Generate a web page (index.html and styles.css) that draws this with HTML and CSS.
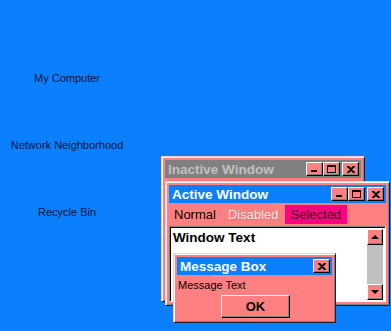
FILE: index.html
```html
<!DOCTYPE html>
<html lang="en">
<head>
    <meta charset="UTF-8">
    <title>Appearance Preview</title>
    <link rel="stylesheet" href="styles.css">
</head>
<body>
    <div class="desktop">
        <div class="icons">
            <div class="icon-label">My Computer</div>
            <div class="icon-label">Network Neighborhood</div>
            <div class="icon-label">Recycle Bin</div>
        </div>

        <div class="win inactive">
            <div class="titlebar">
                <span class="title">Inactive Window</span>
                <div class="controls">
                    <span class="tbtn"><span class="min"></span></span>
                    <span class="tbtn"><span class="max"></span></span>
                    <span class="tbtn close">
                        <svg width="8" height="7" viewBox="0 0 8 7"><path d="M0 0h2l2 2 2-2h2v1L5 3.5 8 6v1H6L4 5 2 7H0V6l3-2.5L0 1z" fill="#000"/></svg>
                    </span>
                </div>
            </div>
        </div>

        <div class="win active">
            <div class="titlebar">
                <span class="title">Active Window</span>
                <div class="controls">
                    <span class="tbtn"><span class="min"></span></span>
                    <span class="tbtn"><span class="max"></span></span>
                    <span class="tbtn close">
                        <svg width="8" height="7" viewBox="0 0 8 7"><path d="M0 0h2l2 2 2-2h2v1L5 3.5 8 6v1H6L4 5 2 7H0V6l3-2.5L0 1z" fill="#000"/></svg>
                    </span>
                </div>
            </div>
            <div class="menubar">
                <span class="menu-item">Normal</span>
                <span class="menu-item disabled">Disabled</span>
                <span class="menu-item selected">Selected</span>
            </div>
            <div class="client">
                <div class="client-text">Window Text</div>
                <div class="scrollbar">
                    <span class="sbtn"><span class="arrow up"></span></span>
                    <span class="sbtn"><span class="arrow down"></span></span>
                </div>
            </div>
        </div>

        <div class="win msgbox">
            <div class="titlebar">
                <span class="title">Message Box</span>
                <div class="controls">
                    <span class="tbtn close">
                        <svg width="8" height="7" viewBox="0 0 8 7"><path d="M0 0h2l2 2 2-2h2v1L5 3.5 8 6v1H6L4 5 2 7H0V6l3-2.5L0 1z" fill="#000"/></svg>
                    </span>
                </div>
            </div>
            <div class="msg-body">
                <div class="msg-text">Message Text</div>
                <button class="ok" type="button">OK</button>
            </div>
        </div>
    </div>
</body>
</html>
```

FILE: styles.css
```css
body {
    margin: 0;
    padding: 0;
    font-family: "Liberation Sans", Arial, sans-serif;
}

.desktop {
    position: relative;
    width: 391px;
    height: 331px;
    background-color: #0a80ff;
    overflow: hidden;
}

.icons {
    width: 134px;
    padding-top: 72px;
    display: flex;
    flex-direction: column;
    align-items: center;
    gap: 54px;
}

.icon-label {
    font-size: 11px;
    line-height: 13px;
    color: #00113a;
}

/* windows sit on the desktop like real windows */
.win {
    position: absolute;
    box-sizing: border-box;
    background-color: #ff8080;
    border: 1px solid;
    border-color: #ffc8c8 #202020 #202020 #ffc8c8;
    box-shadow: inset 1px 1px #ffffff, inset -1px -1px #808080;
    padding: 3px;
    display: flex;
    flex-direction: column;
}

.inactive {
    left: 161px;
    top: 156px;
    width: 204px;
    height: 146px;
}

.active {
    left: 165px;
    top: 181px;
    width: 225px;
    height: 125px;
}

.msgbox {
    left: 173px;
    top: 253px;
    width: 163px;
    height: 70px;
}

.titlebar {
    height: 18px;
    display: flex;
    align-items: center;
    justify-content: space-between;
    padding: 0 2px 0 3px;
    background-color: #0a80ff;
    flex-shrink: 0;
}

.inactive .titlebar {
    background-color: #808080;
}

.title {
    font-size: 13.5px;
    font-weight: bold;
    color: #fff;
}

.inactive .title {
    color: #c0c0c0;
}

.controls {
    display: flex;
}

.tbtn {
    box-sizing: border-box;
    width: 17px;
    height: 14px;
    background-color: #ff8080;
    border: 1px solid;
    border-color: #ffffff #000 #000 #ffffff;
    box-shadow: inset -1px -1px #808080;
    position: relative;
    display: flex;
    align-items: center;
    justify-content: center;
}

.tbtn.close {
    margin-left: 2px;
}

.min {
    position: absolute;
    left: 4px;
    bottom: 3px;
    width: 6px;
    height: 2px;
    background: #000;
}

.max {
    box-sizing: border-box;
    width: 9px;
    height: 8px;
    border: 1px solid #000;
    border-top-width: 2px;
}

.menubar {
    height: 20px;
    display: flex;
    align-items: center;
    margin-top: 1px;
    font-size: 13px;
    flex-shrink: 0;
}

.menu-item {
    padding: 2px 6px;
    line-height: 15px;
    color: #000;
}

.menu-item:first-child {
    padding-left: 5px;
}

.menu-item.disabled {
    color: #eee8e8;
    text-shadow: 1px 1px #e07070;
}

.menu-item.selected {
    background-color: #ff0080;
    color: #40001c;
}

.client {
    flex: 1;
    margin-top: 2px;
    background-color: #fff;
    border: 1px solid;
    border-color: #808080 #ffffff #ffffff #808080;
    box-shadow: inset 1px 1px #000;
    display: flex;
    justify-content: space-between;
    padding: 2px 2px 0 3px;
}

.client-text {
    font-size: 13.5px;
    font-weight: bold;
    color: #000;
    line-height: 18px;
}

.scrollbar {
    width: 16px;
    background-color: #c0c0c0;
    display: flex;
    flex-direction: column;
    justify-content: space-between;
    margin-bottom: 1px;
}

.sbtn {
    box-sizing: border-box;
    width: 16px;
    height: 16px;
    background-color: #ff8080;
    border: 1px solid;
    border-color: #ffffff #000 #000 #ffffff;
    box-shadow: inset -1px -1px #808080;
    display: flex;
    align-items: center;
    justify-content: center;
}

.arrow {
    width: 0;
    height: 0;
    border-left: 4px solid transparent;
    border-right: 4px solid transparent;
}

.arrow.up {
    border-bottom: 4px solid #000;
}

.arrow.down {
    border-top: 4px solid #000;
}

.msgbox .titlebar {
    padding-right: 2px;
}

.msg-body {
    display: flex;
    flex-direction: column;
    padding: 4px 0 0 1px;
}

.msg-text {
    font-size: 11px;
    line-height: 13px;
    color: #000;
}

.ok {
    align-self: flex-start;
    margin: 3px 0 0 43px;
    box-sizing: border-box;
    width: 69px;
    height: 23px;
    padding: 0;
    background-color: #ff8080;
    border: 1px solid;
    border-color: #ffffff #000 #000 #ffffff;
    box-shadow: inset -1px -1px #808080;
    font-family: "Liberation Sans", Arial, sans-serif;
    font-size: 13px;
    font-weight: bold;
    color: #000;
}
```
